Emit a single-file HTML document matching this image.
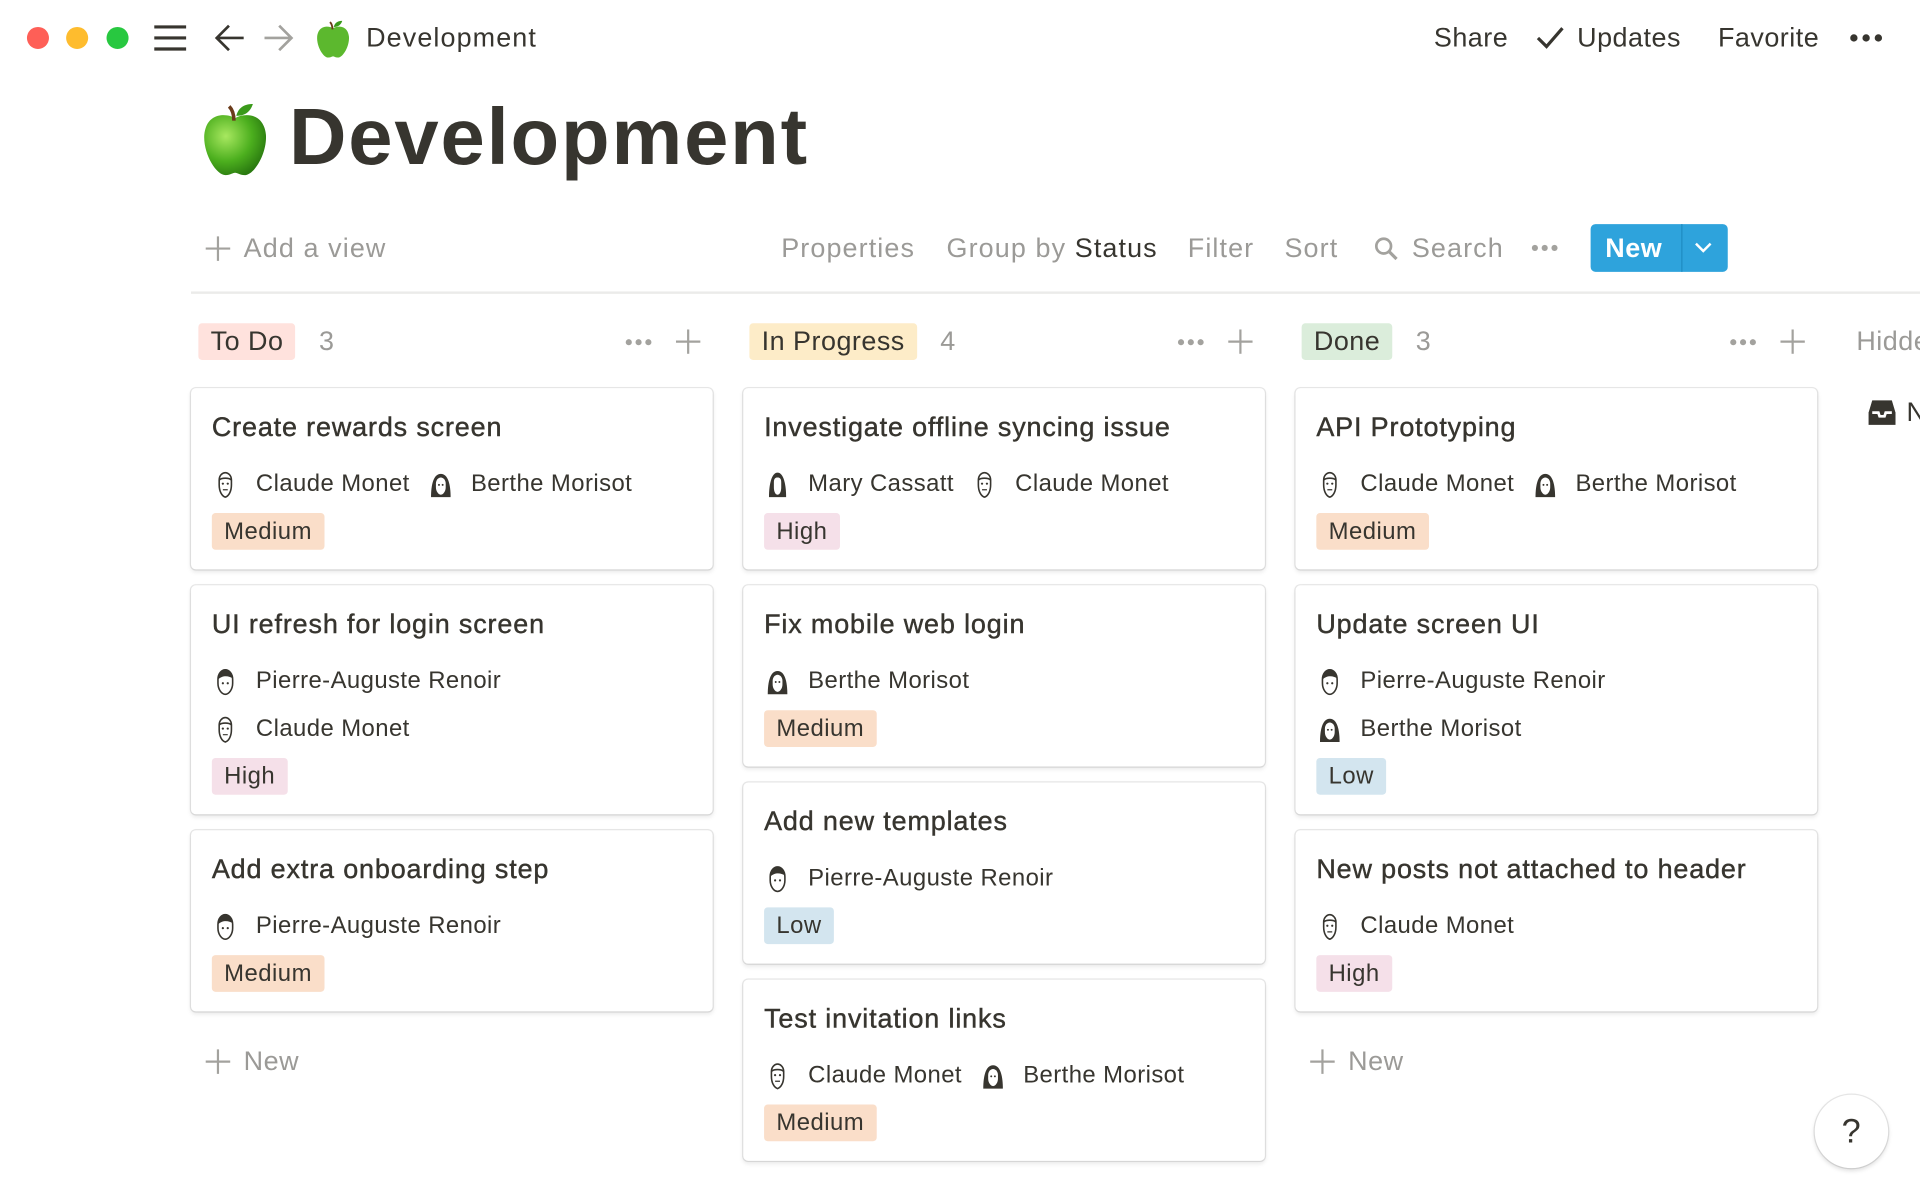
<!DOCTYPE html>
<html><head><meta charset="utf-8">
<style>
html,body{margin:0;padding:0;background:#fff;overflow:hidden;width:1920px;height:1200px}
#w{position:absolute;left:0;top:0;width:1568px;height:980px;transform:scale(1.22449);transform-origin:0 0;font-family:"Liberation Sans",sans-serif;color:#37352f;letter-spacing:.4px}
.a{position:absolute}
.g{color:#9b9a97}
.t{font-size:22px;line-height:30px}
.col{position:absolute;top:317px;width:426px}
.card{box-sizing:border-box;width:426px;border-radius:4px;background:#fff;box-shadow:0 0 0 1px rgba(15,15,15,.1),0 2px 4px rgba(15,15,15,.1);padding:15px 17px 16px;margin-bottom:13px}
.ct{font-size:22px;line-height:34px;height:34px;margin-bottom:10px;white-space:nowrap;letter-spacing:.7px;-webkit-text-stroke:.35px #37352f}
.pr{height:39px;display:flex;align-items:center;font-size:19.5px;white-space:nowrap;letter-spacing:.35px}
.pr svg{width:22px;height:22px;margin-right:14px}
.pr .s{margin-left:14px}
.tag{display:inline-block;height:30px;line-height:30px;padding:0 10px;border-radius:3px;font-size:19.5px;margin-top:4px}
.M{background:#fadec9}.H{background:#f5e0e9}.L{background:#d3e5ef}
.hd{position:absolute;top:264px;height:30px;display:flex;align-items:center;font-size:22px}
.hd .tg{padding:0 10px;height:30px;line-height:30px;border-radius:3px}
.hd .n{color:#9b9a97;margin-left:19px}
.dots{display:inline-flex;gap:3px}.dots i{width:5px;height:5px;border-radius:50%;background:#a3a29e;display:block}
</style></head><body><div id="w">
<div class="a" style="left:22px;top:22px;width:18px;height:18px;border-radius:50%;background:#fe5f57"></div>
<div class="a" style="left:54px;top:22px;width:18px;height:18px;border-radius:50%;background:#febc2e"></div>
<div class="a" style="left:87px;top:22px;width:18px;height:18px;border-radius:50%;background:#28c840"></div>
<svg class="a" style="left:125px;top:20px" width="28" height="22" viewBox="0 0 28 22"><path d="M1 2h26M1 11h26M1 20h26" stroke="#37352f" stroke-width="2.6"/></svg>
<svg class="a" style="left:175px;top:19px" width="26" height="24" viewBox="0 0 26 24"><path d="M24 12H3M12 2L2 12l10 10" stroke="#37352f" stroke-width="2.2" fill="none"/></svg>
<svg class="a" style="left:214px;top:19px" width="26" height="24" viewBox="0 0 26 24"><path d="M2 12h21M14 2l10 10-10 10" stroke="#a3a29e" stroke-width="2.2" fill="none"/></svg>
<svg class="a" style="left:258px;top:16px" width="28" height="32" viewBox="0 0 56 64"><path d="M28 14c-6-4-24-6-26 14-1 16 10 34 18 34 4 0 6-2 8-2s4 2 8 2c8 0 19-18 18-34-2-20-20-18-26-14z" fill="#5cb82e"/><path d="M27 16c0-6-2-10-4-12" stroke="#6b3b1a" stroke-width="3" fill="none"/><path d="M29 12c2-8 8-10 14-10-2 6-6 10-14 10z" fill="#3a9a1a"/></svg>
<div class="a t" style="left:299px;top:16px;letter-spacing:.9px">Development</div>
<div class="a t" style="left:1171px;top:16px">Share</div>
<svg class="a" style="left:1254px;top:21px" width="24" height="20" viewBox="0 0 24 20"><path d="M2 10l7 7L22 2" stroke="#37352f" stroke-width="2.6" fill="none"/></svg>
<div class="a t" style="left:1288px;top:16px">Updates</div>
<div class="a t" style="left:1403px;top:16px">Favorite</div>
<div class="a" style="left:1511px;top:28px;display:flex;gap:4px"><i style="width:6px;height:6px;border-radius:50%;background:#37352f;display:block"></i><i style="width:6px;height:6px;border-radius:50%;background:#37352f;display:block"></i><i style="width:6px;height:6px;border-radius:50%;background:#37352f;display:block"></i></div>
<svg class="a" style="left:163px;top:83px" width="58" height="62" viewBox="0 0 56 64"><defs><radialGradient id="ap" cx=".35" cy=".35" r=".7"><stop offset="0" stop-color="#a8e860"/><stop offset=".6" stop-color="#4caf1e"/><stop offset="1" stop-color="#2a7a10"/></radialGradient></defs><path d="M28 14c-6-4-24-6-26 14-1 16 10 34 18 34 4 0 6-2 8-2s4 2 8 2c8 0 19-18 18-34-2-20-20-18-26-14z" fill="url(#ap)"/><path d="M27 16c0-6-2-10-4-12" stroke="#6b3b1a" stroke-width="3" fill="none"/><path d="M29 12c2-8 8-10 14-10-2 6-6 10-14 10z" fill="#3a9a1a"/></svg>
<div class="a" style="left:236px;top:72px;font-size:65px;font-weight:bold;line-height:80px;color:#37352f;letter-spacing:1.5px">Development</div>
<svg class="a" style="left:167px;top:192px" width="22" height="22" viewBox="0 0 22 22"><path d="M11 1v20M1 11h20" stroke="#a3a29e" stroke-width="1.8"/></svg>
<div class="a t g" style="left:199px;top:188px;letter-spacing:.9px">Add a view</div>
<div class="a t g" style="left:638px;top:188px;letter-spacing:.9px">Properties</div>
<div class="a t g" style="left:773px;top:188px;letter-spacing:.9px">Group by <span style="color:#37352f">Status</span></div>
<div class="a t g" style="left:970px;top:188px;letter-spacing:.9px">Filter</div>
<div class="a t g" style="left:1049px;top:188px;letter-spacing:.9px">Sort</div>
<svg class="a" style="left:1122px;top:193px" width="20" height="20" viewBox="0 0 20 20"><circle cx="8" cy="8" r="6" stroke="#a3a29e" stroke-width="2.2" fill="none"/><path d="M12.5 12.5l6 6" stroke="#a3a29e" stroke-width="2.6"/></svg>
<div class="a t g" style="left:1153px;top:188px;letter-spacing:.9px">Search</div>
<div class="a dots" style="left:1251px;top:200px"><i></i><i></i><i></i></div>
<div class="a" style="left:1299px;top:183px;width:112px;height:39px;background:#2ea3dc;border-radius:4px;color:#fff;font-weight:bold;font-size:22px">
<span style="position:absolute;left:12px;top:5px;line-height:30px">New</span>
<div style="position:absolute;left:74px;top:0;width:1px;height:39px;background:#1f8cc2"></div>
<svg style="position:absolute;left:85px;top:14px" width="14" height="10" viewBox="0 0 14 10"><path d="M1 2l6 6 6-6" stroke="#fff" stroke-width="2" fill="none"/></svg></div>
<div class="a" style="left:156px;top:238px;width:1412px;height:2px;background:#ebebea"></div>
<div class="hd" style="left:162px"><span class="tg" style="background:#ffe2dd">To Do</span><span class="n">3</span></div>
<div class="hd" style="left:612px"><span class="tg" style="background:#fdecc8">In Progress</span><span class="n">4</span></div>
<div class="hd" style="left:1063px"><span class="tg" style="background:#dbeddb">Done</span><span class="n">3</span></div>
<div class="a dots" style="left:511px;top:277px"><i></i><i></i><i></i></div>
<div class="a dots" style="left:962px;top:277px"><i></i><i></i><i></i></div>
<div class="a dots" style="left:1413px;top:277px"><i></i><i></i><i></i></div>
<svg class="a" style="left:552px;top:269px" width="20" height="20"><path d="M10 0v20M0 10h20" stroke="#a3a29e" stroke-width="1.8"/></svg>
<svg class="a" style="left:1003px;top:269px" width="20" height="20"><path d="M10 0v20M0 10h20" stroke="#a3a29e" stroke-width="1.8"/></svg>
<svg class="a" style="left:1454px;top:269px" width="20" height="20"><path d="M10 0v20M0 10h20" stroke="#a3a29e" stroke-width="1.8"/></svg>
<div class="a t g" style="left:1516px;top:264px;white-space:nowrap">Hidden</div>
<svg class="a" style="left:1524px;top:325px" width="26" height="24" viewBox="0 0 26 24"><path d="M2 12L5 2h16l3 10v10H2z" fill="#37352f"/><path d="M5 12h5l1 3h4l1-3h5" stroke="#fff" stroke-width="2.2" fill="none"/></svg>
<div class="a t" style="left:1557px;top:322px">N</div>

<svg width="0" height="0" style="position:absolute"><defs>
<symbol id="m" viewBox="0 0 22 22"><path d="M6 7c0-4 3-6 5-6s5 2 5 6v4c0 5-2 9-5 10-3-1-5-5-5-10z" fill="#fff" stroke="#37352f" stroke-width="1.3"/><path d="M6 7c2-2 8-2 10 0" stroke="#37352f" stroke-width="1.3" fill="none"/><circle cx="9" cy="10" r=".9" fill="#37352f"/><circle cx="13" cy="10" r=".9" fill="#37352f"/><path d="M9 15h4" stroke="#37352f"/></symbol>
<symbol id="b" viewBox="0 0 22 22"><path d="M3 21c0-10 2-19 8-19s8 9 8 19z" fill="#37352f"/><path d="M7 10c0-3 2-5 4-5s4 2 4 5v3c0 3-2 6-4 6s-4-3-4-6z" fill="#fff"/><circle cx="9.5" cy="11" r=".8" fill="#37352f"/><circle cx="12.5" cy="11" r=".8" fill="#37352f"/></symbol>
<symbol id="r" viewBox="0 0 22 22"><path d="M5 9c0-5 3-8 6-8s6 3 6 8v3c0 5-3 9-6 9s-6-4-6-9z" fill="#fff" stroke="#37352f" stroke-width="1.3"/><path d="M5 9c0-5 3-8 6-8s6 3 6 7c-3-2-8-3-12 1z" fill="#37352f"/><circle cx="9" cy="12" r=".9" fill="#37352f"/><circle cx="13" cy="12" r=".9" fill="#37352f"/></symbol>
<symbol id="c" viewBox="0 0 22 22"><path d="M4 21c0-10 2-20 7-20s7 10 7 20z" fill="#37352f"/><path d="M8 9c0-3 1-4 3-4s3 1 3 4v4c0 3-1 6-3 6s-3-3-3-6z" fill="#fff"/></symbol>
</defs></svg>

<div class="col" style="left:156px">
<div class="card"><div class="ct">Create rewards screen</div><div class="pr"><svg><use href="#m"/></svg>Claude Monet<svg class="s"><use href="#b"/></svg>Berthe Morisot</div><span class="tag M">Medium</span></div>
<div class="card"><div class="ct">UI refresh for login screen</div><div class="pr"><svg><use href="#r"/></svg>Pierre-Auguste Renoir</div><div class="pr"><svg><use href="#m"/></svg>Claude Monet</div><span class="tag H">High</span></div>
<div class="card"><div class="ct">Add extra onboarding step</div><div class="pr"><svg><use href="#r"/></svg>Pierre-Auguste Renoir</div><span class="tag M">Medium</span></div>
<div style="display:flex;align-items:center;margin-top:28px;padding-left:11px" class="g"><svg width="22" height="22"><path d="M11 1v20M1 11h20" stroke="#a3a29e" stroke-width="1.8"/></svg><span style="font-size:22px;margin-left:10px">New</span></div>
</div>
<div class="col" style="left:607px">
<div class="card"><div class="ct">Investigate offline syncing issue</div><div class="pr"><svg><use href="#c"/></svg>Mary Cassatt<svg class="s"><use href="#m"/></svg>Claude Monet</div><span class="tag H">High</span></div>
<div class="card"><div class="ct">Fix mobile web login</div><div class="pr"><svg><use href="#b"/></svg>Berthe Morisot</div><span class="tag M">Medium</span></div>
<div class="card"><div class="ct">Add new templates</div><div class="pr"><svg><use href="#r"/></svg>Pierre-Auguste Renoir</div><span class="tag L">Low</span></div>
<div class="card"><div class="ct">Test invitation links</div><div class="pr"><svg><use href="#m"/></svg>Claude Monet<svg class="s"><use href="#b"/></svg>Berthe Morisot</div><span class="tag M">Medium</span></div>
</div>
<div class="col" style="left:1058px">
<div class="card"><div class="ct">API Prototyping</div><div class="pr"><svg><use href="#m"/></svg>Claude Monet<svg class="s"><use href="#b"/></svg>Berthe Morisot</div><span class="tag M">Medium</span></div>
<div class="card"><div class="ct">Update screen UI</div><div class="pr"><svg><use href="#r"/></svg>Pierre-Auguste Renoir</div><div class="pr"><svg><use href="#b"/></svg>Berthe Morisot</div><span class="tag L">Low</span></div>
<div class="card"><div class="ct">New posts not attached to header</div><div class="pr"><svg><use href="#m"/></svg>Claude Monet</div><span class="tag H">High</span></div>
<div style="display:flex;align-items:center;margin-top:28px;padding-left:11px" class="g"><svg width="22" height="22"><path d="M11 1v20M1 11h20" stroke="#a3a29e" stroke-width="1.8"/></svg><span style="font-size:22px;margin-left:10px">New</span></div>
</div>
<div class="a" style="left:1482px;top:894px;width:60px;height:60px;border-radius:50%;background:#fff;box-shadow:0 0 0 1px rgba(15,15,15,.1),0 2px 4px rgba(15,15,15,.15);text-align:center;line-height:60px;font-size:28px">?</div>
</div></body></html>
